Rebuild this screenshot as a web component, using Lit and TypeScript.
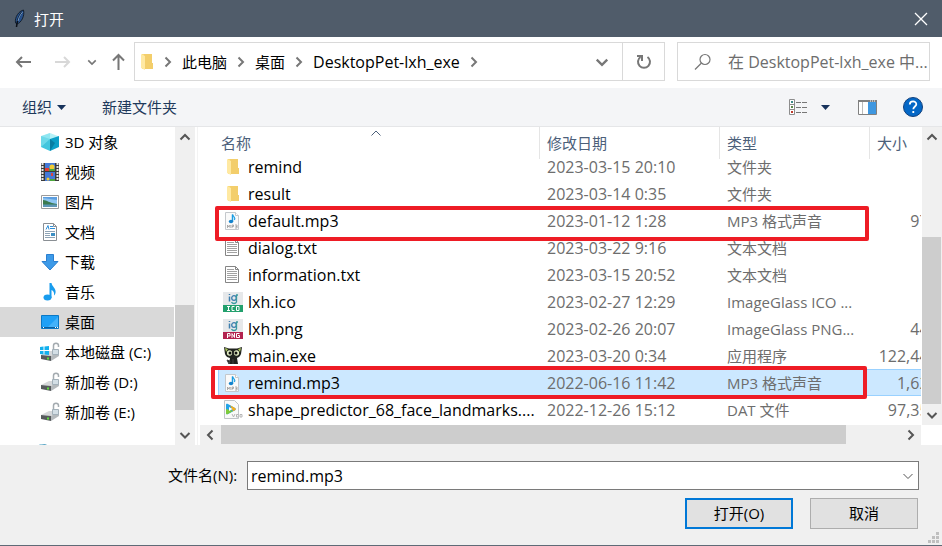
import { LitElement, html, css, svg, nothing, TemplateResult } from "lit";
import { customElement, property, state } from "lit/decorators.js";
import { classMap } from "lit/directives/class-map.js";
import { styleMap } from "lit/directives/style-map.js";

const icon = (w: number, h: number, body: unknown) =>
  html`<svg width=${w} height=${h} viewBox="0 0 ${w} ${h}" aria-hidden="true">${body}</svg>`;

const folder = icon(14, 18, svg`
  <path d="M2 1h10v9h1v6H2z" fill="#f9d978"/>
  <path d="M4 1h8v9h1v6H4z" fill="#f3ce6b"/>
  <path d="M1 1l4 2v14l-4-2z" fill="#ffe9a2"/>`);

const page = svg`<path d="M2.5 1.5h10l3 3v14h-13z" fill="#fafafa" stroke="#c4c8cc"/><path d="M12.5 1.5v3h3" fill="#fff" stroke="#c4c8cc"/>`;

const mp3 = icon(20, 20, svg`${page}
  <path d="M9.500 3.500v7" stroke="#1b9de2" stroke-width="1.500"/>
  <path d="M9.500 3.500c.5 2.500 3.500 2.500 2 5.500" stroke="#1b9de2" fill="none" stroke-width="1.200"/>
  <ellipse cx="8" cy="10.500" rx="2.200" ry="1.700" fill="#1583cc"/>
  <path d="M4.500 17v-3l1.300 2 1.300-2v3M9 17v-3h1.500v1.500H9M12 14h2v3h-2M12.500 15.500H14" fill="none" stroke="#999" stroke-width=".8"/>`);

const txt = icon(20, 20, svg`
  <path d="M2.500 1.500h10l3 3v13h-13z" fill="#fff" stroke="#858585"/><path d="M12.500 1.500v3h3" fill="none" stroke="#858585"/>
  <path d="M4 4.500h7M4 6.500h10M4 8.500h10M4 10.500h10M4 12.500h10M4 14.500h10" stroke="#a2a2a2"/>`);

const glass = (color: string, label: TemplateResult) => icon(20, 20, svg`
  <path d="M0 0h20v13H0z" fill="#e6e8ea"/><path d="M0 13h20v7H0z" fill=${color}/>
  <path d="M6.500 4.500v5M6.500 2v1" stroke="#3e7fae" stroke-width="1.500"/>
  <circle cx="11" cy="6" r="2.300" fill="none" stroke="#3e7fae" stroke-width="1.300"/>
  <path d="M13.500 3v7c-1 2-4 2-5 0M13 3h2" fill="none" stroke="#3c9aa0" stroke-width="1.300"/>
  <g fill="none" stroke="#fff" stroke-width="1">${label}</g>`);

const ico = glass("#22a06d", svg`<path d="M4 14.500h3M5.500 14.500v4M4 18.500h3M11.500 14.500H9v4h2.500M13.500 14.500h2.500v4h-2.500z"/>` as any);
const png = glass("#b3224f", svg`<path d="M4.500 19v-4.500h2.500v2.500h-2.500M9 19v-4.500l2.500 4v-4.500M16.500 14.500h-3v4h3v-2h-1.500"/>` as any);

const cat = icon(20, 20, svg`
  <path d="M1 1l5 1.500h8L19 1l-1 7c-1 3-3 3.500-4 4l1 6H6l1-6C5 11.500 3 11 2 8z" fill="#20231f"/>
  <path d="M2 2l3 1-2 3zM18 2l-3 1 2 3z" fill="#a9c65b"/>
  <ellipse cx="6.500" cy="7" rx="2.600" ry="2.800" fill="#e4efc5"/><ellipse cx="13.500" cy="7" rx="2.600" ry="2.800" fill="#e4efc5"/>
  <circle cx="7" cy="7" r="1.500" fill="#111"/><circle cx="13" cy="7" r="1.500" fill="#111"/>
  <path d="M4 14l3 1-1 3zM10 13v5" stroke="#444" fill="#20231f"/>`);

const video = icon(20, 20, svg`<path d="M1.500 .5h10l4 4v14h-14z" fill="#fafafa" stroke="#c0c4c8"/>
  <path d="M3 5c0-1.500 1-1.500 2-1l7 4c1 .8 1 1.500 0 2.200L5 14c-1 .5-2 .2-2-1z" fill="#22a3e8"/>
  <path d="M3 9v4c0 1.200 1 1.500 2 1l5-3z" fill="#7ecb3a"/><path d="M7 5.200L12 8c1 .8 1 1.500 0 2.200l-2 1.100z" fill="#f5ad1c"/>
  <path d="M6 7v4l3.500-2z" fill="#fff"/>
  <path d="M9 14l1.500 3 1.500-3M15.500 14.500h-2v2.500h2M17 14.500h2v2.500h-2z" fill="none" stroke="#b5b5b5"/>`);

const cube = icon(20, 20, svg`
  <path d="M10 1l9 3.500-9 3.500-9-3.500z" fill="#b5f1f7"/><path d="M1 4l9 3v12l-9-4z" fill="#42c6de"/>
  <path d="M19 4l-9 3v12l9-4z" fill="#0b9fc7"/><path d="M1 4l9-3v6l-9 8z" fill="#7fe1ee" opacity=".7"/>
  <path d="M10 7l5 4-5 8z" fill="#087ea3"/>`);

const film = icon(20, 20, svg`
  <path d="M1 1h18v18H1z" fill="#3c3c3c"/>
  <path d="M5 1h10v8H5zM5 10h10v9H5z" fill="#4479d8"/>
  <path d="M2.500 1v18M17.500 1v18" stroke="#e9e9e9" stroke-width="2" stroke-dasharray="2 1"/>
  <path d="M5 6h4v3H5z" fill="#e33c35"/><circle cx="12" cy="5" r="2.500" fill="#f0cb34"/><path d="M9 7h6v2H9z" fill="#4ca53b"/>
  <circle cx="8" cy="17" r="1.500" fill="#f0cb34"/><path d="M10 17h5v2h-5z" fill="#4ca53b"/><path d="M11 11h2v3h-2z" fill="#d8473f"/>`);

const picture = icon(20, 20, svg`
  <path d="M1.500 3.500h17v13h-17z" fill="#fff" stroke="#9b9b9b"/>
  <path d="M3 5h14v10H3z" fill="#8fc6f2"/><path d="M3 5h14v3L3 6z" fill="#5c9ee0"/>
  <path d="M3 8c4 0 6 3 14 4v1H3z" fill="#3b7a4f"/><path d="M3 12.500h14V15H3z" fill="#5d96b6"/>`);

const doc = icon(20, 20, svg`
  <path d="M3.500 1.500h10l3 3v14h-13z" fill="#fff" stroke="#8a8f94"/><path d="M13.500 1.500v3h3" fill="none" stroke="#8a8f94"/>
  <path d="M6 7.500l2-4 1 4M10 4.500h3M10 6.500h5" fill="none" stroke="#2f8fd8"/>
  <path d="M5 9.500h10M5 11.500h5M5 13.500h5M5 15.500h10" stroke="#8fa4b6"/><path d="M11 11h4v3h-4z" fill="#3b8fc4"/>`);

const download = icon(20, 20, svg`<path d="M6.500 2.500h7v7h4.500L10 18 2 9.500h4.500z" fill="#3d9ae8" stroke="#2b7fd0"/>`);

const music = icon(20, 20, svg`
  <ellipse cx="7.500" cy="15.500" rx="4" ry="3" fill="#189cee"/>
  <path d="M9.500 1h2c.5 4 5 5 4 10-.3 1-.8 2-1.500 2.500.5-3-.5-4.500-2.500-5.500v8h-2z" fill="#189cee"/>`);

const desktop = icon(20, 20, svg`
  <path d="M1.500 3.500h17v13h-17z" fill="#1ea0f6" stroke="#0b78c4"/><path d="M2 15h16v1H2z" fill="#0b5f9f"/>
  <path d="M8 15L18 5v10z" fill="#43b2fa"/><path d="M3 15h1v1H3zM15 15h1v1h-1zM17 15h1v1h-1z" fill="#fff"/>`);

const drive = (system: boolean) => icon(20, 20, svg`
  <path d="M1 13l8-4h10l-8 5z" fill="#d6d8da"/><path d="M1 13l10 1v5L1 17z" fill="#565a5d"/>
  <path d="M11 14l8-5v5l-8 5z" fill="#b5b9bc"/><path d="M7 16.500h2" stroke="#5fe03d" stroke-width="2"/>
  <path d="M13.500 8V3.500c0-3 5-3 5 0V5" fill="none" stroke="#a4abb0" stroke-width="1.500"/>
  <path d="M12.500 7.500h6v5h-6z" fill="#d3dee5" stroke="#a3b0b9"/>
  ${system ? svg`<path d="M0 5l3.500-.5v3.500H0zM4.500 4.400L9 4v4H4.500zM0 9h3.500v3.500L0 12zM4.500 9H9v4l-4.500-.5z" fill="#12b0ee"/>` : nothing}`);

const network = icon(20, 20, svg`<circle cx="6" cy="10" r="9" fill="#3b94b8"/><path d="M2 3c3-2 6 0 8 2" stroke="#b8dcea" fill="none" stroke-width="2"/>`);

const chevron = (dir: "up" | "down" | "left" | "right", size = 12, width = 2) => {
  const d = {
    up: "M1.500 8.500L6 4l4.500 4.500",
    down: "M1.500 4L6 8.500 10.500 4",
    left: "M8.500 1.500L4 6l4.500 4.500",
    right: "M3.500 1.500L8 6l-4.500 4.500",
  }[dir];
  return html`<svg width=${size} height=${size} viewBox="0 0 12 12" aria-hidden="true">
    <path d=${d} fill="none" stroke="currentColor" stroke-width=${width}/></svg>`;
};

const caret = icon(9, 5, svg`<path d="M0 0h9L4.500 5z" fill="#17335c"/>`);

@customElement("scroll-track")
class ScrollTrack extends LitElement {
  @property() direction: "vertical" | "horizontal" = "vertical";
  @property({ type: Number }) before = 0;
  @property({ type: Number }) thumb = 1;
  @property({ type: Number }) after = 0;

  static styles = css`
    :host { display: flex; flex-direction: column; width: 20px; flex: none; background: #f0f0f0; color: #555; }
    :host([direction="horizontal"]) { flex-direction: row; width: auto; height: 20px; }
    button { all: unset; display: grid; place-items: center; width: 20px; height: 20px; flex: none; }
    .space { flex: 0 0 0; }
    .thumb { flex: 0 0 0; background: #cdcdcd; margin-right: 1px; }
    :host([direction="horizontal"]) .thumb { margin: 0 0 1px; }
  `;

  render() {
    const v = this.direction === "vertical";
    return html`
      <button aria-label=${v ? "向上滚动" : "向左滚动"}>${chevron(v ? "up" : "left")}</button>
      <div class="space" style=${styleMap({ flexGrow: String(this.before) })}></div>
      <div class="thumb" style=${styleMap({ flexGrow: String(this.thumb) })}></div>
      <div class="space" style=${styleMap({ flexGrow: String(this.after) })}></div>
      <button aria-label=${v ? "向下滚动" : "向右滚动"}>${chevron(v ? "down" : "right")}</button>`;
  }
}

interface FileRow { icon: TemplateResult; name: string; date: string; type: string; size?: string }

const files: FileRow[] = [
  { icon: folder, name: "remind", date: "2023-03-15 20:10", type: "文件夹" },
  { icon: folder, name: "result", date: "2023-03-14 0:35", type: "文件夹" },
  { icon: mp3, name: "default.mp3", date: "2023-01-12 1:28", type: "MP3 格式声音", size: "977 KB" },
  { icon: txt, name: "dialog.txt", date: "2023-03-22 9:16", type: "文本文档" },
  { icon: txt, name: "information.txt", date: "2023-03-15 20:52", type: "文本文档" },
  { icon: ico, name: "lxh.ico", date: "2023-02-27 12:29", type: "ImageGlass ICO ..." },
  { icon: png, name: "lxh.png", date: "2023-02-26 20:07", type: "ImageGlass PNG...", size: "444 KB" },
  { icon: cat, name: "main.exe", date: "2023-03-20 0:34", type: "应用程序", size: "122,444 KB" },
  { icon: mp3, name: "remind.mp3", date: "2022-06-16 11:42", type: "MP3 格式声音", size: "1,622 KB" },
  { icon: video, name: "shape_predictor_68_face_landmarks....", date: "2022-12-26 15:12", type: "DAT 文件", size: "97,355 KB" },
];

const places = [
  { icon: cube, name: "3D 对象" },
  { icon: film, name: "视频" },
  { icon: picture, name: "图片" },
  { icon: doc, name: "文档" },
  { icon: download, name: "下载" },
  { icon: music, name: "音乐" },
  { icon: desktop, name: "桌面" },
  { icon: drive(true), name: "本地磁盘 (C:)" },
  { icon: drive(false), name: "新加卷 (D:)" },
  { icon: drive(false), name: "新加卷 (E:)" },
];

@customElement("app-root")
class AppRoot extends LitElement {
  @state() private selected = "remind.mp3";
  @state() private place = "桌面";

  static styles = css`
    :host {
      display: flex; flex-direction: column; height: 100vh; overflow: hidden; box-sizing: border-box;
      font: 15px/20px "Open Sans", "Noto Sans CJK SC", sans-serif; color: #000; background: #fff;
      border-bottom: 1px solid #5f6a76;
    }
    * { box-sizing: border-box; }
    svg { display: block; flex: none; }
    button { all: unset; box-sizing: border-box; cursor: default; white-space: nowrap; }
    .latin { font-size: 16px; }

    .title { display: flex; align-items: center; height: 37px; flex: none; padding: 0 14px 0 12px; gap: 8px; background: #505c6a; color: #fff; }
    .title h1 { flex: 1; margin: 0; font: inherit; }

    .nav { display: flex; align-items: center; height: 51px; flex: none; padding: 0 12px 2px 15px; color: #777; }
    .back { margin-right: 22px; }
    .forward { margin-right: 16px; color: #d8d8d8; }
    .recent { margin-right: 15px; }
    .up { margin-right: 9px; }
    .address { display: flex; flex: 1; height: 39px; border: 1px solid #d9d9d9; }
    .crumbs { display: flex; flex: 1; align-items: center; gap: 8px; padding: 0 13px 0 5px; }
    .crumbs .name { color: #000; }
    .crumbs .more { margin-left: auto; }
    .refresh { display: grid; place-items: center; width: 42px; border-left: 1px solid #d9d9d9; }
    .search { display: flex; align-items: center; width: 253px; height: 39px; margin-left: 12px; border: 1px solid #d9d9d9; padding-left: 16px; gap: 16px; }
    .search input { flex: 1; min-width: 0; border: 0; padding: 0; outline: 0; font: inherit; font-size: 16px; background: none; }
    .search input::placeholder { color: #6d6d6d; opacity: 1; }

    .tools { display: flex; align-items: center; height: 39px; flex: none; padding: 0 19px 0 22px; background: #f4f5f7; border-bottom: 1px solid #e5e6e8; color: #1e395b; }
    .organize { display: flex; align-items: center; gap: 5px; margin-right: 36px; }
    .views { display: flex; align-items: center; gap: 13px; margin-left: auto; margin-right: 28px; }
    .preview { margin-right: 26px; }

    .body { display: flex; flex: 1; min-height: 0; }
    .places { width: 174px; flex: none; margin: 0 1px 0 0; padding: 0; list-style: none; overflow: hidden; }
    .places button { display: flex; align-items: center; gap: 5px; width: 100%; height: 30px; padding-left: 40px; }
    .places .current { background: #d9d9d9; }
    .places .network { padding: 16px 0 0 37px; }
    .divider { width: 5px; flex: none; border-right: 2px solid #fff; border-left: 2px solid #fff; background: #f3f3f3; }
    .main { display: flex; flex-direction: column; flex: 1; min-width: 0; }
    .pane { position: relative; flex: 1; min-height: 0; overflow: hidden; padding-left: 18px; }
    .list { display: flex; flex: 1; min-height: 0; }
    table { width: 754px; border-collapse: separate; border-spacing: 0; table-layout: fixed; }
    .c-name { width: 322px; } .c-date { width: 180px; } .c-type { width: 150px; } .c-size { width: 102px; }
    th { position: relative; height: 26px; padding: 6px 0 0 7px; font-weight: 400; text-align: left; color: #4c607a; background: #fff; }
    th:first-child { padding-left: 3px; }
    th + th::before { content: ""; position: absolute; top: 0; left: -1px; width: 1px; height: 32px; background: #e5e5e5; }
    .sort { position: absolute; top: 0; left: 152px; }
    td { height: 27px; padding: 1px 0 0 7px; border: 0 solid #99d1ff; color: #6d6d6d; white-space: nowrap; overflow: hidden; }
    td.latin { font-size: 16px; }
    td:first-child { padding-left: 5px; color: #000; }
    td.size { padding: 1px 10px 0 0; text-align: right; }
    .file { display: flex; align-items: center; height: 20px; font-size: 16px; }
    .glyph { display: grid; place-items: center; width: 20px; height: 20px; margin-right: 5px; flex: none; }
    .chosen td { background: #cce8ff; border-width: 1px 0; }
    .chosen td:first-child { border-left-width: 1px; padding-left: 4px; }
    .mark { position: absolute; width: 654px; height: 35px; border: 4px solid #ee1c25; border-radius: 2px; pointer-events: none; }
    .mark.first { top: 79px; left: 15px; }
    .mark.second { top: 239px; left: 11px; width: 656px; height: 33px; }
    .bottom { display: flex; }
    .bottom scroll-track { flex: 1; }
    .corner { width: 21px; background: #fff; }
    .gap { width: 1px; flex: none; }

    .footer { position: relative; flex: none; height: 100px; padding: 16px 23px 0 168px; background: #f0f0f0; }
    .filename { display: flex; align-items: center; }
    .filename label { width: 79px; flex: none; padding-bottom: 2px; }
    .combo { display: flex; align-items: center; flex: 1; height: 29px; padding: 0 4px 0 3px; background: #fff; border: 1px solid #7a7a7a; }
    .combo input { flex: 1; min-width: 0; border: 0; padding: 0; outline: 0; font: inherit; font-size: 16px; }
    .combo button { color: #555; }
    .actions { display: flex; justify-content: flex-end; gap: 17px; margin-top: 8px; padding-right: 1px; }
    .actions button { display: grid; place-items: center; width: 108px; height: 31px; padding-bottom: 2px; background: #e1e1e1; border: 1px solid #adadad; }
    .actions .open { border: 2px solid #0078d7; }
    .grip { position: absolute; right: 3px; bottom: 2px; }
  `;

  render() {
    return html`
      <header class="title">
        ${icon(14, 20, svg`<path d="M11.500 1C7 2 2.500 8 3.500 14l1.500 1c4-1 8-8 6.500-14z" fill="#27518c" stroke="#14202f"/>
          <path d="M10 3C7 7 5 12 4.500 18" stroke="#0c1118" stroke-width="1.500" fill="none"/><path d="M10.500 3C8 6 6.500 9 6 12" stroke="#79a5da" fill="none"/>`)}
        <h1>打开</h1>
        <button aria-label="关闭">${icon(14, 14, svg`<path d="M1 1l12 12M13 1L1 13" stroke="#fff" stroke-width="1.300"/>`)}</button>
      </header>

      <nav class="nav">
        <button class="back" aria-label="后退">${icon(17, 14, svg`<path d="M16 7H2M7 2L2 7l5 5" fill="none" stroke="currentColor" stroke-width="2"/>`)}</button>
        <button class="forward" aria-label="前进">${icon(17, 14, svg`<path d="M1 7h14M10 2l5 5-5 5" fill="none" stroke="currentColor" stroke-width="2"/>`)}</button>
        <button class="recent" aria-label="最近浏览的位置">${chevron("down", 10)}</button>
        <button class="up" aria-label="上移">${icon(13, 17, svg`<path d="M6.500 17V2M1 7.500L6.500 2 12 7.500" fill="none" stroke="currentColor" stroke-width="2"/>`)}</button>
        <div class="address">
          <div class="crumbs">
            ${folder}${chevron("right", 12)}
            <button class="name">此电脑</button>${chevron("right", 12)}
            <button class="name">桌面</button>${chevron("right", 12)}
            <button class="name latin">DesktopPet-lxh_exe</button>${chevron("right", 12)}
            <button class="more" aria-label="以前的位置">${chevron("down", 14)}</button>
          </div>
          <button class="refresh" aria-label="刷新">${icon(16, 16, svg`<path d="M4.500 3A6 6 0 1 0 11.500 3" fill="none" stroke="currentColor" stroke-width="2"/><path d="M1 2h5v5" fill="none" stroke="currentColor" stroke-width="2"/>`)}</button>
        </div>
        <div class="search">
          ${icon(18, 18, svg`<circle cx="11" cy="6.500" r="5" fill="none" stroke="currentColor" stroke-width="1.200"/><path d="M7.500 10L1 16.500" stroke="currentColor" stroke-width="1.200"/>`)}
          <input aria-label="搜索" placeholder="在 DesktopPet-lxh_exe 中..." />
        </div>
      </nav>

      <div class="tools">
        <button class="organize">组织 ${caret}</button>
        <button>新建文件夹</button>
        <button class="views" aria-label="更改视图">
          ${icon(19, 16, svg`<path d="M.5 .5h5v15h-5zM.5 5.500h5M.5 10.500h5" fill="#fff" stroke="#8d8d8d"/>
            <path d="M2 2h2v2H2z" fill="#3c8a8a"/><path d="M2 7h2v2H2z" fill="#5c8a4c"/><path d="M2 12h2v2H2z" fill="#c0392b"/>
            <path d="M7 3.500h5M13 3.500h5M7 8.500h5M13 8.500h5M7 13.500h5M13 13.500h5" stroke="#777"/>`)}
          ${caret}
        </button>
        <button class="preview" aria-label="预览窗格">
          ${icon(19, 15, svg`<path d="M.5 .5h18v14H.5z" fill="#fff" stroke="#808080"/><path d="M0 0h19v2H0z" fill="#808080"/><path d="M4.500 2v12" stroke="#bbb"/>
            <path d="M10 2h8v12h-8z" fill="#3e97e0"/><path d="M12 1h1M14 1h1M16 1h1" stroke="#fff"/>`)}
        </button>
        <button aria-label="获取帮助">
          ${icon(20, 20, svg`<circle cx="10" cy="10" r="9.500" fill="#0467c6" stroke="#12407c"/>
            <path d="M6.800 7.500c0-4 6.500-4 6.500-.3 0 2.300-3 2.300-3 5M10.300 14v2" fill="none" stroke="#fff" stroke-width="1.800"/>`)}
        </button>
      </div>

      <div class="body">
        <ul class="places">
          ${places.map((p) => html`<li><button class=${classMap({ current: p.name === this.place })}
            @click=${() => (this.place = p.name)}>${p.icon}<span>${p.name}</span></button></li>`)}
          <li class="network">${network}</li>
        </ul>
        <scroll-track direction="vertical" .before=${158} .thumb=${105} .after=${15}></scroll-track>
        <div class="divider"></div>
        <main class="main">
          <div class="list">
            <div class="pane">
              <table>
                <colgroup><col class="c-name" /><col class="c-date" /><col class="c-type" /><col class="c-size" /></colgroup>
                <thead><tr>
                  <th>名称<span class="sort">${chevron("up", 12, 1)}</span></th>
                  <th>修改日期</th><th>类型</th><th>大小</th>
                </tr></thead>
                <tbody>
                  ${files.map((f) => html`<tr class=${classMap({ chosen: f.name === this.selected })} @click=${() => (this.selected = f.name)}>
                    <td><div class="file"><span class="glyph">${f.icon}</span>${f.name}</div></td>
                    <td class="latin">${f.date}</td><td>${f.type}</td><td class="size latin">${f.size ?? ""}</td>
                  </tr>`)}
                </tbody>
              </table>
              <div class="mark first"></div>
              <div class="mark second"></div>
            </div>
            <div class="gap"></div>
            <scroll-track direction="vertical" .before=${90} .thumb=${166} .after=${1}></scroll-track>
          </div>
          <div class="bottom">
            <scroll-track direction="horizontal" .before=${1} .thumb=${625} .after=${55}></scroll-track>
            <div class="corner"></div>
          </div>
        </main>
      </div>

      <footer class="footer">
        <div class="filename">
          <label for="file">文件名(N):</label>
          <div class="combo"><input id="file" .value=${this.selected} /><button aria-label="显示列表">${chevron("down", 12, 1)}</button></div>
        </div>
        <div class="actions"><button class="open">打开(O)</button><button>取消</button></div>
        <svg class="grip" width="11" height="11" viewBox="0 0 11 11" fill="#bfbfbf" aria-hidden="true">
          <path d="M8 0h3v3H8zM8 4h3v3H8zM8 8h3v3H8zM4 4h3v3H4zM4 8h3v3H4zM0 8h3v3H0z"/>
        </svg>
      </footer>`;
  }
}
